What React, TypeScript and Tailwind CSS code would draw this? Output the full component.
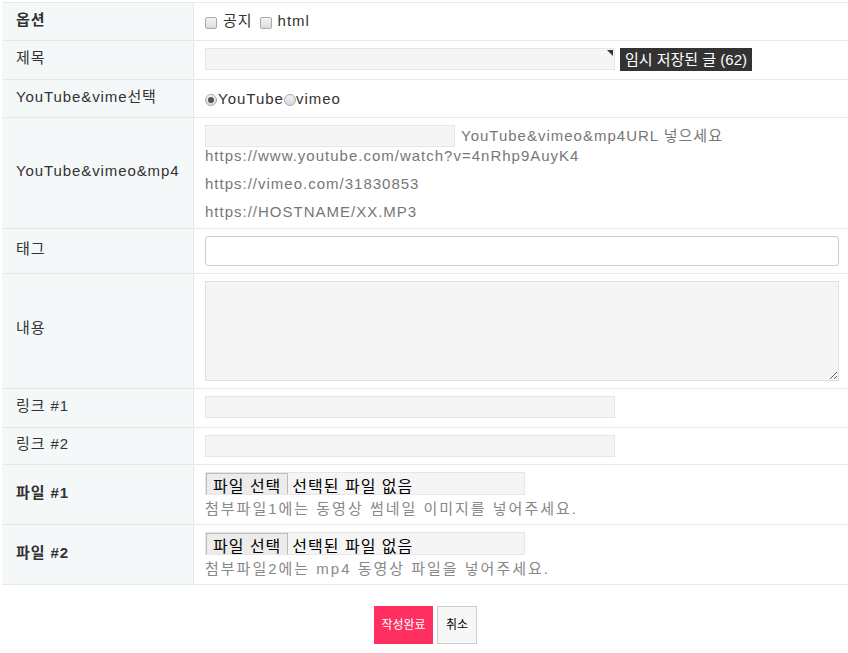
const font = 'font-["Liberation_Sans","Noto_Sans_CJK_KR",sans-serif]'

function Label({ children, bold = false }: { children: React.ReactNode; bold?: boolean }) {
  return (
    <div
      className={`flex items-center pl-[14px] pb-[3px] bg-[#f5f8f9] border-r border-[#e6e9ea] text-[15px] text-[#333] tracking-[0.9px] ${bold ? 'font-bold' : ''}`}
    >
      {children}
    </div>
  )
}

function CheckBox() {
  return <span className="block w-[12px] h-[12px] rounded-[2px] border border-[#a9a9a9] bg-gradient-to-b from-[#f4f4f4] to-[#dcdcdc]" />
}

function Radio({ checked = false }: { checked?: boolean }) {
  return (
    <span className="inline-flex items-center justify-center w-[12px] h-[12px] rounded-full border border-[#a9a9a9] bg-gradient-to-b from-[#f4f4f4] to-[#d8d8d8]">
      {checked && <span className="w-[6px] h-[6px] rounded-full bg-[#555]" />}
    </span>
  )
}

function FileField({ help }: { help: string }) {
  return (
    <div className="pl-[11px] pt-[7px]">
      <div className="w-[320px] h-[23px] overflow-hidden bg-[#f5f5f5] border border-[#e6e6e6] flex items-start">
        <span className="h-[23px] px-[6px] pt-[2px] bg-[#ececec] border border-[#bdbdbd] text-[16px] text-black leading-[22px] tracking-[1px]">파일 선택</span>
        <span className="pl-[4px] pt-[3px] text-[16px] text-black leading-[22px] tracking-[1px]">선택된 파일 없음</span>
      </div>
      <div className="mt-[3px] text-[15px] text-[#888] tracking-[2px]">{help}</div>
    </div>
  )
}

export default function App() {
  const row = 'grid grid-cols-[192px_1fr] border-b border-[#e8e8e8]'
  const flatInput = 'h-[22px] bg-[#f5f5f5] border border-[#e6e6e6]'

  return (
    <div className={`w-[848px] h-[653px] bg-white ${font}`}>
      <div className="mt-[2px] ml-[2px] border-t border-[#e8e8e8]">
        {/* 옵션 */}
        <div className={`${row} h-[38px]`}>
          <Label bold>옵션</Label>
          <div className="flex items-start pl-[11px] pt-[7px] text-[15px] text-[#333] tracking-[1px]">
            <span className="mt-[7px]"><CheckBox /></span>
            <span className="ml-[6px]">공지</span>
            <span className="ml-[7px] mt-[7px]"><CheckBox /></span>
            <span className="ml-[6px]">html</span>
          </div>
        </div>

        {/* 제목 */}
        <div className={`${row} h-[39px]`}>
          <Label>제목</Label>
          <div className="flex items-start pl-[11px] pt-[7px]">
            <div className={`relative w-[410px] ${flatInput}`}>
              <span className="absolute right-[1px] top-[1px] w-0 h-0 border-t-[6px] border-l-[6px] border-t-[#333] border-l-transparent" />
            </div>
            <span className="ml-[5px] h-[23px] px-[5px] bg-[#333] text-white text-[15px] leading-[23px]">임시 저장된 글 (62)</span>
          </div>
        </div>

        {/* YouTube&vime선택 */}
        <div className={`${row} h-[38px]`}>
          <Label>YouTube&amp;vime선택</Label>
          <div className="flex items-center pl-[11px] pt-[2px] text-[15px] text-[#333] tracking-[1px]">
            <Radio checked />
            <span className="ml-[1px]">YouTube</span>
            <Radio />
            <span>vimeo</span>
          </div>
        </div>

        {/* YouTube&vimeo&mp4 */}
        <div className={`${row} h-[111px]`}>
          <Label>YouTube&amp;vimeo&amp;mp4</Label>
          <div className="pl-[11px] pt-[7px] text-[15px] text-[#777] tracking-[1px]">
            <div className="flex items-center h-[22px]">
              <div className={`w-[250px] ${flatInput}`} />
              <span className="ml-[6px]">YouTube&amp;vimeo&amp;mp4URL 넣으세요</span>
            </div>
            <div className="leading-[18px]">https://www.youtube.com/watch?v=4nRhp9AuyK4</div>
            <div className="mt-[5px] leading-[28px]">https://vimeo.com/31830853</div>
            <div className="leading-[28px]">https://HOSTNAME/XX.MP3</div>
          </div>
        </div>

        {/* 태그 */}
        <div className={`${row} h-[45px]`}>
          <Label>태그</Label>
          <div className="pl-[11px] pr-[9px] pt-[7px]">
            <div className="h-[30px] bg-white border border-[#ccc] rounded-[3px]" />
          </div>
        </div>

        {/* 내용 */}
        <div className={`${row} h-[115px]`}>
          <Label>
            <span className="-mt-[3px]">내용</span>
          </Label>
          <div className="pl-[11px] pr-[9px] pt-[7px]">
            <textarea className="block w-full h-[100px] bg-[#f5f5f5] border border-[#e0e0e0] outline-none" />
          </div>
        </div>

        {/* 링크 */}
        <div className={`${row} h-[39px]`}>
          <Label>링크 #1</Label>
          <div className="pl-[11px] pt-[7px]">
            <div className={`w-[410px] ${flatInput}`} />
          </div>
        </div>
        <div className={`${row} h-[37px]`}>
          <Label>링크 #2</Label>
          <div className="pl-[11px] pt-[7px]">
            <div className={`w-[410px] ${flatInput}`} />
          </div>
        </div>

        {/* 파일 */}
        <div className={`${row} h-[60px]`}>
          <Label bold>파일 #1</Label>
          <FileField help="첨부파일1에는 동영상 썸네일 이미지를 넣어주세요." />
        </div>
        <div className={`${row} h-[60px]`}>
          <Label bold>파일 #2</Label>
          <FileField help="첨부파일2에는 mp4 동영상 파일을 넣어주세요." />
        </div>
      </div>

      <div className="flex justify-center gap-[4px] mt-[21px] pl-[3px]">
        <button className="w-[59px] h-[38px] bg-[#ff3061] text-white text-[12px]">작성완료</button>
        <button className="w-[40px] h-[38px] bg-[#f7f7f7] border border-[#ccc] text-black text-[12px]">취소</button>
      </div>
    </div>
  )
}
